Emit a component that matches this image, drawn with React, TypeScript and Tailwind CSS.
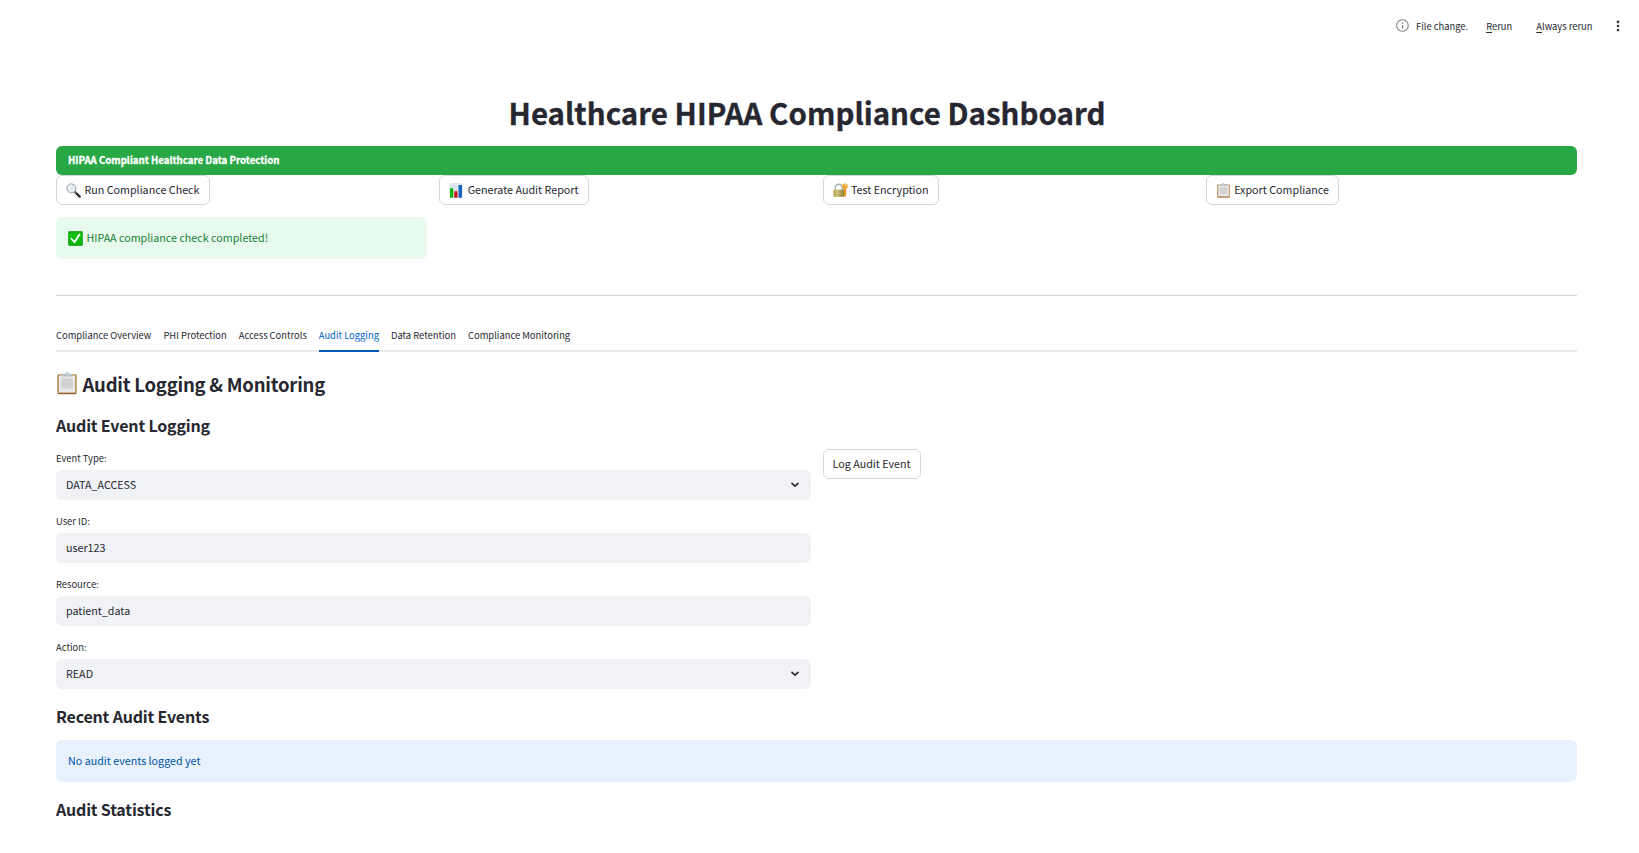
import type { ReactNode } from "react";

function InfoIcon() {
  return (
    <svg className="size-[15px] shrink-0" viewBox="0 0 24 24" fill="#7d7e87" aria-hidden="true">
      <path d="M11 7h2v2h-2zm0 4h2v6h-2zm1-9C6.480 2 2 6.480 2 12s4.480 10 10 10 10-4.480 10-10S17.520 2 12 2zm0 18.400c-4.600 0-8.400-3.800-8.400-8.400S7.400 3.600 12 3.600s8.400 3.800 8.400 8.400-3.800 8.400-8.400 8.400z" />
    </svg>
  );
}

function DotsIcon() {
  return (
    <svg className="h-3 w-1 shrink-0" viewBox="0 0 4 12" fill="#31333f" aria-hidden="true">
      <circle cx="2" cy="1.900" r="1.300" />
      <circle cx="2" cy="6" r="1.300" />
      <circle cx="2" cy="10.100" r="1.300" />
    </svg>
  );
}

function ChevronIcon() {
  return (
    <svg className="h-[6px] w-[8px] shrink-0" viewBox="0 0 8 6" fill="none" stroke="#262730" strokeWidth="1.600" aria-hidden="true">
      <path d="M1 1.300 4 4.100 7 1.300" strokeLinecap="round" strokeLinejoin="round" />
    </svg>
  );
}

function MagnifierIcon() {
  return (
    <svg className="size-[15px] shrink-0" viewBox="0 0 30 30" aria-hidden="true">
      <path d="M18.500 18.500 27.300 27.300" stroke="#2b2b2d" strokeWidth="4.600" strokeLinecap="round" />
      <path d="M17.400 17.400 20 20" stroke="#8a8d92" strokeWidth="2.600" />
      <circle cx="10.800" cy="10.800" r="9" fill="#e6edf0" stroke="#9a9da1" strokeWidth="2" />
      <path d="M5 9.500c.7-2.600 2.600-4.300 5.200-4.600" stroke="#fff" strokeWidth="2" fill="none" strokeLinecap="round" />
    </svg>
  );
}

function ChartIcon() {
  return (
    <svg className="size-[15px] shrink-0" viewBox="0 0 30 30" aria-hidden="true">
      <rect x="1" y="0" width="26" height="30" fill="#dfe6ee" />
      <path d="M1 7.500h26M1 15h26M1 22.500h26" stroke="#c9d3de" strokeWidth=".8" />
      <rect x="2" y="10.500" width="6.500" height="19" fill="#12b312" />
      <rect x="10.500" y="16.500" width="6.500" height="13" fill="#cc1717" />
      <rect x="19" y="4" width="7" height="25.500" fill="#1a63c4" />
    </svg>
  );
}

function LockKeyIcon() {
  return (
    <svg className="size-[15px] shrink-0" viewBox="0 0 30 30" aria-hidden="true">
      <defs>
        <linearGradient id="lockBody" x1="0" x2="1" y1="0" y2="0">
          <stop offset="0" stopColor="#b3a452" />
          <stop offset=".35" stopColor="#d8d084" />
          <stop offset="1" stopColor="#8d7f33" />
        </linearGradient>
      </defs>
      <path d="M4.500 15V9.500a7 7 0 0 1 14 0V15" fill="none" stroke="#a6afb8" strokeWidth="2.800" />
      <circle cx="24" cy="6.500" r="5.600" fill="#eda52a" />
      <circle cx="25" cy="4" r="1.500" fill="#fff" />
      <path d="M21.500 11h5v14l-2.500 3-2.500-2z" fill="#e09a22" />
      <rect x="1" y="13" width="21" height="15" rx="2" fill="url(#lockBody)" />
      <path d="M1.500 18h20M1.500 23h20" stroke="#8f853c" strokeWidth=".7" />
    </svg>
  );
}

function ClipboardIcon({ className }: { className: string }) {
  return (
    <svg className={className} viewBox="0 0 30 32" aria-hidden="true">
      <rect x="1.500" y="3" width="27" height="28" rx="2" fill="#b98a50" />
      <path d="M2.500 30h25" stroke="#936534" strokeWidth="1.500" />
      <rect x="3.700" y="4.800" width="22.600" height="23.700" fill="#e9e9ea" />
      <rect x="7" y="9" width="16" height="14" fill="#d0d1d3" />
      <path d="M8 6.200V4.200c0-1 .8-1.700 1.800-1.700h2.700a2.500 2.500 0 0 1 5 0h2.700c1 0 1.800.7 1.800 1.700v2z" fill="#b9c0c7" />
      <circle cx="15" cy="2.600" r="1" fill="#fff" />
    </svg>
  );
}

function CheckIcon() {
  return (
    <svg className="size-[15px] shrink-0" viewBox="0 0 30 30" aria-hidden="true">
      <defs>
        <linearGradient id="checkFill" x1="0" x2="0" y1="0" y2="1">
          <stop offset="0" stopColor="#0aa30a" />
          <stop offset=".25" stopColor="#13c413" />
          <stop offset="1" stopColor="#06ad06" />
        </linearGradient>
      </defs>
      <rect x=".5" y=".5" width="29" height="29" rx="3.500" fill="url(#checkFill)" stroke="#07920a" />
      <path d="M7 15.500 13 22.500 23 7" fill="none" stroke="#fff" strokeWidth="3.600" strokeLinecap="round" strokeLinejoin="round" />
    </svg>
  );
}

function Button({ icon, children }: { icon?: ReactNode; children: ReactNode }) {
  return (
    <button className="flex h-[30px] w-fit items-center gap-[3.300px] rounded-md border border-[#d5d6d8] bg-white px-[9.100px] text-[10.740px] whitespace-nowrap">
      {icon}
      <span>{children}</span>
    </button>
  );
}

function Field({ label, value, select }: { label: string; value: string; select?: boolean }) {
  return (
    <div>
      <div className="flex h-[21px] items-start text-[9.380px] leading-[18px]">{label}</div>
      <div className="flex h-[30px] items-center justify-between rounded-md bg-[#f0f2f6] pr-[12px] pl-[10px] text-[10.720px]">
        <span>{value}</span>
        {select && <ChevronIcon />}
      </div>
    </div>
  );
}

function SubHeading({ className, children }: { className: string; children: ReactNode }) {
  return (
    <h3 className={`h-[22px] text-[16px] leading-[22px] font-bold tracking-[-0.180px] text-[#262730] ${className}`}>
      {children}
    </h3>
  );
}

const tabs = [
  "Compliance Overview",
  "PHI Protection",
  "Access Controls",
  "Audit Logging",
  "Data Retention",
  "Compliance Monitoring",
];

export default function App() {
  return (
    <div className="h-[853px] overflow-hidden bg-white font-['Noto_Sans_CJK_SC','Noto_Sans',sans-serif] text-[#262730]">
      <header className="flex h-[51px] items-center justify-end pr-[19.500px] text-[9.380px]">
        <InfoIcon />
        <span className="ml-[6.500px] pt-[2px]">File change.</span>
        <span className="ml-[18px] pt-[2px]"><u className="underline-offset-2">R</u>erun</span>
        <span className="ml-[24px] pt-[2px]"><u className="underline-offset-2">A</u>lways rerun</span>
        <span className="ml-[23px]"><DotsIcon /></span>
      </header>

      <main className="pr-[62px] pl-[56px]">
        <h1 className="mt-[41px] mr-[24px] ml-[5px] text-center text-[29.500px] leading-[40px] font-bold [-webkit-text-stroke:0.300px_#262730]">
          Healthcare HIPAA Compliance Dashboard
        </h1>

        <div className="mt-[14px] flex h-[29px] items-center rounded-md bg-[#28a745] px-3 text-[9.660px] font-bold text-white [-webkit-text-stroke:0.300px_#fff]">
          HIPAA Compliant Healthcare Data Protection
        </div>

        <div className="grid grid-cols-4 gap-3">
          <div>
            <Button icon={<MagnifierIcon />}>Run Compliance Check</Button>
            <div className="mt-3 flex h-[42px] items-center gap-[3.500px] rounded-md bg-[#e8f9ee] px-3 text-[10.720px] text-[#158237]">
              <CheckIcon />
              <span>HIPAA compliance check completed!</span>
            </div>
          </div>
          <Button icon={<ChartIcon />}>Generate Audit Report</Button>
          <Button icon={<LockKeyIcon />}>Test Encryption</Button>
          <Button icon={<ClipboardIcon className="size-[15px] shrink-0" />}>Export Compliance</Button>
        </div>

        <hr className="mt-9 border-t border-[#d6d6d8]" />

        <nav className="mt-[24px] flex h-[32px] gap-3 border-b-2 border-[#eaeaeb] text-[9.400px]">
          {tabs.map((tab) => (
            <div
              key={tab}
              className={
                tab === "Audit Logging"
                  ? "-mb-[2px] flex h-[32px] border-b-2 border-[#0054b3] leading-[30px] text-[#0062c4]"
                  : "leading-[30px]"
              }
            >
              {tab}
            </div>
          ))}
        </nav>

        <h2 className="mt-[20px] flex h-[25px] items-center gap-[4.500px] text-[18.500px] font-bold tracking-[-0.220px]">
          <ClipboardIcon className="-mt-[2px] h-[23px] w-[22px] shrink-0" />
          <span>Audit Logging &amp; Monitoring</span>
        </h2>

        <SubHeading className="mt-[17px]">Audit Event Logging</SubHeading>

        <div className="mt-[13px] grid grid-cols-2 gap-3">
          <div className="flex flex-col gap-3">
            <Field label="Event Type:" value="DATA_ACCESS" select />
            <Field label="User ID:" value="user123" />
            <Field label="Resource:" value="patient_data" />
            <Field label="Action:" value="READ" select />
          </div>
          <Button>Log Audit Event</Button>
        </div>

        <SubHeading className="mt-[16px]">Recent Audit Events</SubHeading>
        <div className="mt-[13px] flex h-[42px] items-center rounded-md bg-[#e8f2ff] px-3 text-[10.720px] text-[#0054a3]">
          No audit events logged yet
        </div>
        <SubHeading className="mt-[16px]">Audit Statistics</SubHeading>
      </main>
    </div>
  );
}
